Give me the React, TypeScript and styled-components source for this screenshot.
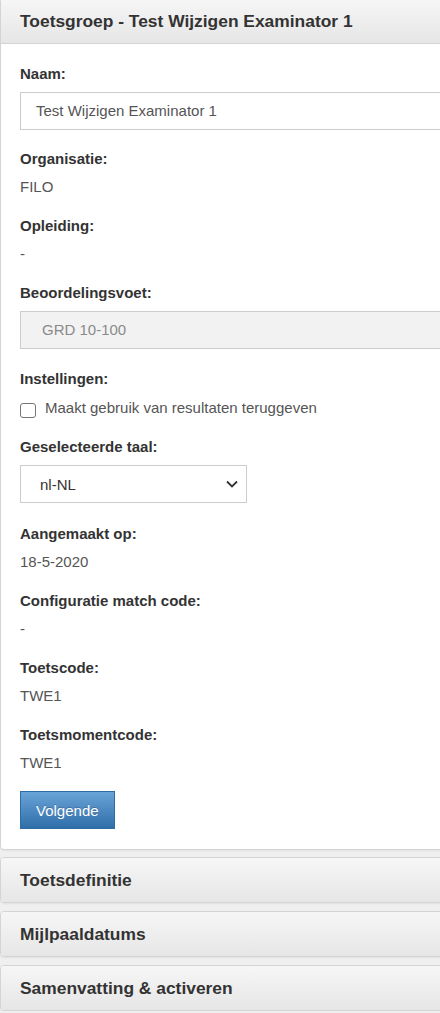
import React from "react";
import styled, { createGlobalStyle } from "styled-components";

const Global = createGlobalStyle`
  html, body { margin: 0; padding: 0; overflow: hidden; background: #efefef; }
  body { font-family: "Liberation Sans", Arial, sans-serif; font-size: 15px; color: #333; }
  * { box-sizing: border-box; }
`;

const Page = styled.div`
  width: 470px;
  display: flex;
  flex-direction: column;
  gap: 8px;
`;

const Panel = styled.section<{ $first?: boolean }>`
  border: 1px solid #d4d4d4;
  border-radius: 4px;
  background: #fff;
  box-shadow: 0 1px 2px rgba(0, 0, 0, 0.06);
  overflow: hidden;
  margin-top: ${(p) => (p.$first ? "-2px" : "0")};
  margin-bottom: ${(p) => (p.$first ? "-1px" : "0")};
`;

const Header = styled.div<{ $open?: boolean }>`
  padding: 12px 19px;
  line-height: 20px;
  font-size: 17.4px;
  font-weight: bold;
  color: #333;
  background: linear-gradient(to bottom, #f6f6f6 0%, #e6e6e6 100%);
  border-bottom: ${(p) => (p.$open ? "1px solid #d4d4d4" : "none")};
  box-sizing: ${(p) => (p.$open ? "content-box" : "border-box")};
  height: ${(p) => (p.$open ? "20px" : "44px")};
`;

const Body = styled.div`
  padding: 20px 19px;
  display: flex;
  flex-direction: column;
`;

const Group = styled.div<{ $mb?: number }>`
  display: flex;
  flex-direction: column;
  gap: 8px;
  margin-bottom: ${(p) => p.$mb ?? 19}px;
`;

const Label = styled.div`
  font-weight: bold;
  line-height: 20px;
  color: #333;
`;

const Value = styled.div`
  line-height: 20px;
  color: #555;
`;

const Input = styled.div<{ $disabled?: boolean; $pad?: number }>`
  height: 38px;
  border: 1px solid #ccc;
  background: ${(p) => (p.$disabled ? "#f2f2f2" : "#fff")};
  color: ${(p) => (p.$disabled ? "#8a8a8a" : "#555")};
  display: flex;
  align-items: center;
  padding-left: ${(p) => p.$pad ?? 15}px;
  line-height: 20px;
`;

const SelectBox = styled.div`
  width: 227px;
  height: 38px;
  border: 1px solid #ccc;
  background: #fff;
  color: #333;
  display: flex;
  align-items: center;
  justify-content: space-between;
  padding: 0 4px 0 19px;
`;

const CheckRow = styled.label`
  display: flex;
  align-items: flex-start;
  gap: 9px;
  height: 21px;
  color: #555;
  line-height: 20px;
  padding-top: 1px;
`;

const Box = styled.span`
  width: 16px;
  height: 15px;
  margin-top: 5px;
  border: 1px solid #767676;
  border-radius: 3px;
  background: #fff;
  flex: none;
`;

const Button = styled.button`
  align-self: flex-start;
  height: 38px;
  padding: 0 15px;
  margin-top: -1px;
  font-family: "Liberation Sans", Arial, sans-serif;
  font-size: 15px;
  color: #fff;
  text-shadow: 0 -1px 0 rgba(0, 0, 0, 0.2);
  border: 1px solid #2e6da4;
  border-radius: 0;
  background: linear-gradient(to bottom, #6aa4d7 0%, #2f6eaa 100%);
`;

const fields: [string, string][] = [
  ["Aangemaakt op:", "18-5-2020"],
  ["Configuratie match code:", "-"],
  ["Toetscode:", "TWE1"],
  ["Toetsmomentcode:", "TWE1"],
];

export default function App() {
  return (
    <>
      <Global />
      <Page>
        <Panel $first>
          <Header $open>Toetsgroep - Test Wijzigen Examinator 1</Header>
          <Body>
            <Group>
              <Label>Naam:</Label>
              <Input>Test Wijzigen Examinator 1</Input>
            </Group>
            <Group>
              <Label>Organisatie:</Label>
              <Value>FILO</Value>
            </Group>
            <Group>
              <Label>Opleiding:</Label>
              <Value>-</Value>
            </Group>
            <Group $mb={20}>
              <Label>Beoordelingsvoet:</Label>
              <Input $disabled $pad={21}>GRD 10-100</Input>
            </Group>
            <Group>
              <Label>Instellingen:</Label>
              <CheckRow>
                <Box />
                Maakt gebruik van resultaten teruggeven
              </CheckRow>
            </Group>
            <Group $mb={21}>
              <Label>Geselecteerde taal:</Label>
              <SelectBox>
                <span>nl-NL</span>
                <svg width="20" height="20" viewBox="0 0 20 20">
                  <path d="M5 7.5 L10 12.5 L15 7.5" fill="none" stroke="#333" strokeWidth="1.8" />
                </svg>
              </SelectBox>
            </Group>
            {fields.map(([l, v]) => (
              <Group key={l}>
                <Label>{l}</Label>
                <Value>{v}</Value>
              </Group>
            ))}
            <Button>Volgende</Button>
          </Body>
        </Panel>
        <Panel>
          <Header>Toetsdefinitie</Header>
        </Panel>
        <Panel>
          <Header>Mijlpaaldatums</Header>
        </Panel>
        <Panel>
          <Header>Samenvatting &amp; activeren</Header>
        </Panel>
      </Page>
    </>
  );
}
